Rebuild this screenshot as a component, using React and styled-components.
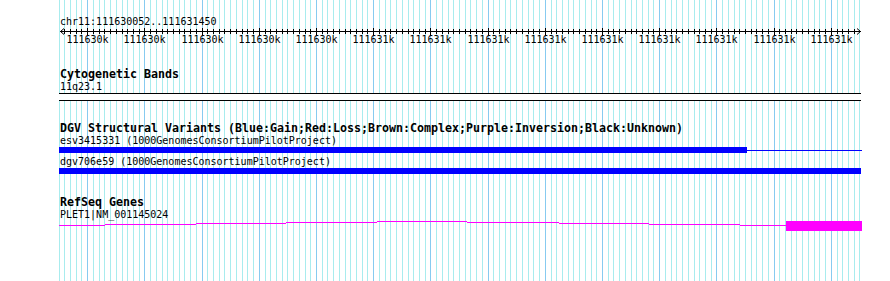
import React from 'react';
import styled, { createGlobalStyle } from 'styled-components';

const GlobalStyle = createGlobalStyle`
  html, body { margin: 0; padding: 0; background: #ffffff; }
  body { font-family: "DejaVu Sans Mono", "Liberation Mono", monospace; }
`;

const VIEW_W = 890;
const VIEW_H = 281;
const FIRST_BP = 111630050;
const LAST_BP = 111631450;
const toX = (bp) => Math.round(58.6 + (bp - FIRST_BP) * 0.572);

const gridStops = [];
for (let bp = FIRST_BP; bp <= LAST_BP; bp += 10) {
  gridStops.push({ bp, x: toX(bp), major: bp % 100 === 0 });
}

const tickLabel = (bp) => (bp - 111630000 <= 500 ? '111630k' : '111631k');

const Page = styled.div`
  position: relative;
  width: ${VIEW_W}px;
  height: ${VIEW_H}px;
  overflow: hidden;
  background: #ffffff;
`;

const GridLayer = styled.svg`
  position: absolute;
  left: 0;
  top: 0;
  z-index: 0;
`;

const Tracks = styled.div`
  position: relative;
  z-index: 1;
  display: flex;
  flex-direction: column;
  padding-top: 15px;
`;

const Label = styled.div`
  font-family: "DejaVu Sans Mono", "Liberation Mono", monospace;
  font-size: 10px;
  line-height: 13px;
  height: 13px;
  color: #000000;
  padding-left: 60px;
  white-space: nowrap;
  margin-top: ${(p) => p.$gap || 0}px;
`;

const Title = styled.div`
  font-family: "DejaVu Sans Mono", "Liberation Mono", monospace;
  font-weight: bold;
  font-size: 11.63px;
  line-height: 12px;
  height: 12px;
  color: #000000;
  padding-left: 60px;
  white-space: nowrap;
`;

const Track = styled.section`
  display: flex;
  flex-direction: column;
  margin-top: ${(p) => p.$gap}px;
`;

const Drawing = styled.svg`
  display: block;
  flex: none;
`;

const Band = styled.div`
  margin-left: 59px;
  width: 802px;
  height: 6px;
  border-top: 1px solid #000000;
  border-bottom: 1px solid #000000;
  background: #ffffff;
`;

const VariantRow = styled.div`
  display: flex;
  align-items: center;
  height: 6px;
  padding-left: 59px;
`;

const VariantSpan = styled.div`
  flex: none;
  width: ${(p) => p.$w}px;
  height: ${(p) => (p.$thin ? 1 : 6)}px;
  background: #0000ff;
`;

function Ruler() {
  const y = 3.5;
  return (
    <Drawing width={VIEW_W} height={18} shapeRendering="crispEdges">
      <line x1={60} y1={y} x2={861} y2={y} stroke="#000" strokeWidth={1} />
      <g shapeRendering="auto" stroke="#000" strokeWidth={1} fill="none">
        <polyline points="64,0.5 60.5,3.5 64,6.5" />
        <polyline points="857,0.5 860.5,3.5 857,6.5" />
      </g>
      {gridStops.slice(1, -1).map((s) => (
        <line
          key={s.bp}
          x1={s.x + 0.5}
          x2={s.x + 0.5}
          y1={s.major ? 0 : 1}
          y2={s.major ? 7 : 6}
          stroke="#000"
          strokeWidth={1}
        />
      ))}
      {gridStops
        .filter((s) => s.major)
        .map((s) => (
          <text
            key={'t' + s.bp}
            x={s.x + 0.5}
            y={15}
            textAnchor="middle"
            fontFamily='"DejaVu Sans Mono", monospace'
            fontSize="10"
            fill="#000"
          >
            {tickLabel(s.bp)}
          </text>
        ))}
    </Drawing>
  );
}

const intronSteps = [
  [59, 105, 4],
  [105, 196, 3],
  [196, 286, 2],
  [286, 377, 1],
  [377, 467, 0],
  [467, 559, 1],
  [559, 649, 2],
  [649, 740, 3],
  [740, 786, 4],
];

function GeneModel() {
  return (
    <Drawing width={VIEW_W} height={10} shapeRendering="crispEdges">
      {intronSteps.map(([a, b, y]) => (
        <rect key={a} x={a} y={y} width={b - a} height={1} fill="#ff00ff" />
      ))}
      <rect x={786} y={0} width={76} height={10} fill="#ff00ff" />
    </Drawing>
  );
}

export default function App() {
  return (
    <>
      <GlobalStyle />
      <Page>
        <GridLayer width={VIEW_W} height={VIEW_H} shapeRendering="crispEdges">
          {gridStops
            .filter((s) => !s.major)
            .map((s) => (
              <line key={s.bp} x1={s.x + 0.5} x2={s.x + 0.5} y1={0} y2={VIEW_H} stroke="#a8ecee" strokeWidth={1} />
            ))}
          {gridStops
            .filter((s) => s.major)
            .map((s) => (
              <line key={s.bp} x1={s.x + 0.5} x2={s.x + 0.5} y1={0} y2={VIEW_H} stroke="#87cbf0" strokeWidth={1} />
            ))}
        </GridLayer>
        <Tracks>
          <Label>chr11:111630052..111631450</Label>
          <Ruler />

          <Track $gap={22}>
            <Title>Cytogenetic Bands</Title>
            <Label>11q23.1</Label>
            <Band />
          </Track>

          <Track $gap={21}>
            <Title>DGV Structural Variants (Blue:Gain;Red:Loss;Brown:Complex;Purple:Inversion;Black:Unknown)</Title>
            <Label>esv3415331 (1000GenomesConsortiumPilotProject)</Label>
            <VariantRow>
              <VariantSpan $w={688} />
              <VariantSpan $w={115} $thin />
            </VariantRow>
            <Label $gap={2}>dgv706e59 (1000GenomesConsortiumPilotProject)</Label>
            <VariantRow>
              <VariantSpan $w={802} />
            </VariantRow>
          </Track>

          <Track $gap={22}>
            <Title>RefSeq Genes</Title>
            <Label>PLET1|NM_001145024</Label>
            <GeneModel />
          </Track>
        </Tracks>
      </Page>
    </>
  );
}
